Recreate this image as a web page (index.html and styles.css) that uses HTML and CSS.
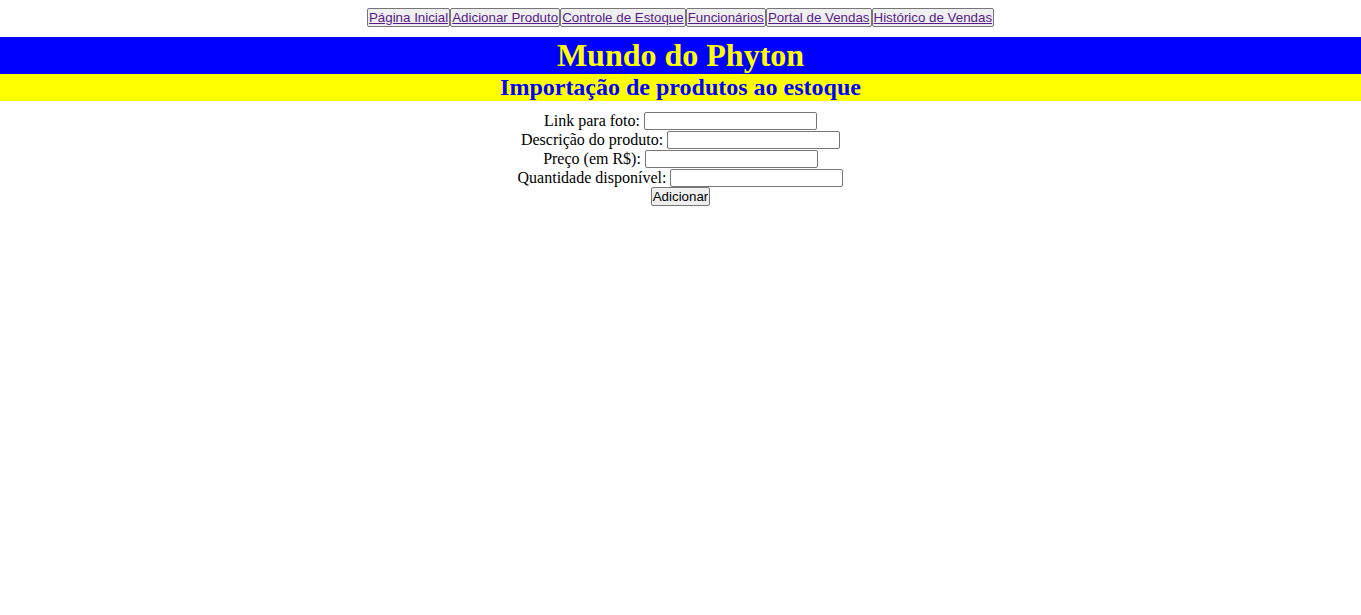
FILE: index.html
```html
<!DOCTYPE html>
<html lang="pt-BR">
<head>
<meta charset="utf-8">
<title>Mundo do Phyton</title>
<link rel="stylesheet" href="styles.css">
</head>
<body>
<nav class="nav">
  <button class="nav-btn"><a href="#">Página Inicial</a></button><button class="nav-btn"><a href="#">Adicionar Produto</a></button><button class="nav-btn"><a href="#">Controle de Estoque</a></button><button class="nav-btn"><a href="#">Funcionários</a></button><button class="nav-btn"><a href="#">Portal de Vendas</a></button><button class="nav-btn"><a href="#">Histórico de Vendas</a></button>
</nav>
<h1 class="title">Mundo do Phyton</h1>
<h2 class="subtitle">Importação de produtos ao estoque</h2>
<form class="form">
  <div class="row"><label>Link para foto:</label><input class="field" type="text"></div>
  <div class="row"><label>Descrição do produto:</label><input class="field" type="text"></div>
  <div class="row"><label>Preço (em R$):</label><input class="field" type="text"></div>
  <div class="row"><label>Quantidade disponível:</label><input class="field" type="text"></div>
  <div class="row"><button class="submit" type="button">Adicionar</button></div>
</form>
</body>
</html>
```
FILE: styles.css
```css
html, body {
  margin: 0;
  padding: 0;
  background: #fff;
}
body {
  font-family: "Liberation Serif", "Times New Roman", serif;
  font-size: 16px;
  color: #000;
}
.nav {
  display: flex;
  justify-content: center;
  padding-top: 8px;
  height: 19px;
  margin-bottom: 10px;
}
.nav-btn {
  font-family: "Liberation Sans", Arial, sans-serif;
  font-size: 13.33px;
  height: 19px;
  padding: 0 1px;
  margin: 0;
  background: #efefef;
  border: 1px solid #767676;
  border-radius: 2px;
  line-height: 15px;
  display: flex;
  align-items: center;
}
.nav-btn a {
  color: #551a8b;
  text-decoration: underline;
}
.title {
  margin: 0;
  background: #0000ff;
  color: #ffff00;
  text-align: center;
  font-size: 32px;
  font-weight: bold;
  height: 37px;
  line-height: 37px;
}
.subtitle {
  margin: 0;
  background: #ffff00;
  color: #0000ff;
  text-align: center;
  font-size: 24px;
  font-weight: bold;
  height: 27px;
  line-height: 27px;
}
.form {
  margin-top: 10px;
  display: flex;
  flex-direction: column;
  align-items: center;
}
.row {
  display: flex;
  align-items: center;
  height: 19px;
}
.row label {
  margin-right: 4px;
  line-height: 19px;
}
.field {
  box-sizing: border-box;
  width: 173px;
  height: 18px;
  border: 1px solid #767676;
  border-radius: 2px;
  padding: 1px 2px;
  margin: 0;
  font-family: "Liberation Sans", Arial, sans-serif;
  font-size: 13.33px;
}
.submit {
  box-sizing: border-box;
  height: 19px;
  padding: 0 1px;
  margin: 0;
  font-family: "Liberation Sans", Arial, sans-serif;
  font-size: 13.33px;
  color: #000;
  background: #efefef;
  border: 1px solid #767676;
  border-radius: 2px;
  line-height: 15px;
}
```
